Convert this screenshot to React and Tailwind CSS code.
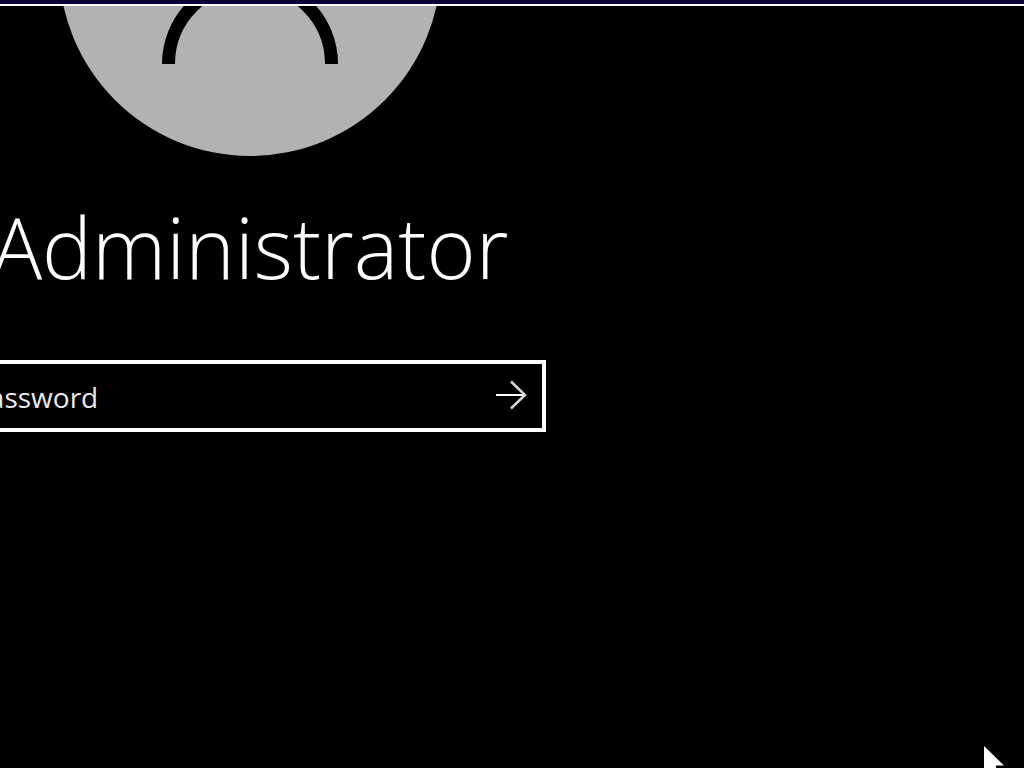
import React, { useState } from 'react';

const Avatar = () => (
    <svg className="h-[150px] w-[382px]" viewBox="0 0 382 150" role="img" aria-label="User">
        <circle cx="191" cy="-41" r="191" fill="#b2b2b2" />
        <path d="M109.5 58a81.5 81.5 0 0 1 163 0" fill="none" stroke="#000" strokeWidth="13" />
    </svg>
);

const Cursor = () => (
    <svg className="pointer-events-none absolute right-0 bottom-0 h-6 w-10" viewBox="0 0 40 24" aria-hidden="true">
        <path d="M0 2L20 21.5H12V24H0Z" fill="#fff" />
    </svg>
);

const App = () => {
    const [password, setPassword] = useState('');

    return (
        <div className="relative min-h-screen overflow-hidden bg-black text-white font-['Open_Sans','Noto_Sans',sans-serif]">
            <div className="h-[6px] border-b-2 border-white bg-[#070038]" />

            <main className="-ml-[46px] flex w-[592px] flex-col items-center">
                <Avatar />
                <h1 className="mt-8 text-[84px] leading-[118px] font-light whitespace-nowrap">Administrator</h1>
                <form
                    className="mt-[54px] flex h-[72px] w-full items-center border-4 border-white"
                    onSubmit={(e) => e.preventDefault()}
                >
                    <input
                        type="password"
                        aria-label="Password"
                        placeholder="Password"
                        value={password}
                        onChange={(e) => setPassword(e.target.value)}
                        className="h-full min-w-0 flex-1 bg-transparent pt-0.5 pl-3.5 text-[28px] text-white outline-none placeholder:text-[#ebebeb]"
                    />
                    <button type="submit" aria-label="Submit" className="flex h-full w-[62px] items-center justify-center">
                        <svg className="h-8 w-8" viewBox="0 0 32 32" fill="none" stroke="#fff" strokeWidth="2">
                            <path d="M1 15H30" />
                            <path d="M16 1.5L30 15L16 28.5" stroke="#d8d8d8" strokeWidth="2.5" />
                        </svg>
                    </button>
                </form>
            </main>

            <Cursor />
        </div>
    );
};

export default App;
